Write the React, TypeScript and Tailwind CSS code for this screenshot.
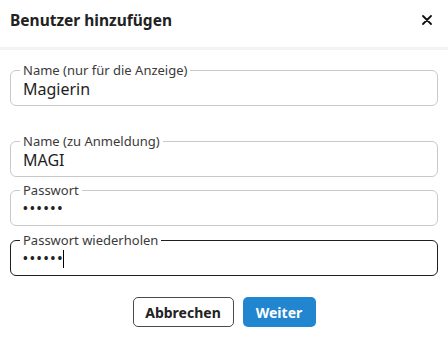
import React from "react";

interface FieldProps {
  label: string;
  value: string;
  password?: boolean;
  focused?: boolean;
  className?: string;
}

const Field: React.FC<FieldProps> = ({ label, value, password, focused, className }) => {
  return (
    <fieldset
      className={`rounded-[6px] border px-[9px] pb-[5px] ${
        focused ? "border-[#1f1f1f]" : "border-[#c9c9c9]"
      } ${className ?? ""}`}
    >
      <legend className="px-[3px] text-[13px] leading-4 text-[#3a3a3a]">{label}</legend>
      <div className="flex h-[22px] items-center px-[3px]">
        {password ? (
          <span className="text-[12.5px] font-bold tracking-[2.2px] text-[#222]">{value}</span>
        ) : (
          <span className="text-[16px] leading-[22px] text-[#1e1e1e]">{value}</span>
        )}
        {focused && <span className="ml-[-1px] h-[18px] w-px bg-black" />}
      </div>
    </fieldset>
  );
};

export default function App() {
  return (
    <div
      className="h-[346px] w-[448px] bg-white"
      style={{ fontFamily: '"Noto Sans", "Open Sans", sans-serif' }}
    >
      {/* header */}
      <div className="flex h-[50px] items-start justify-between border-b-[3px] border-[#f3f3f3] pl-[10px] pr-[16px] pt-[8px]">
        <h1 className="text-[15.5px] font-bold leading-6 text-[#222]">Benutzer hinzufügen</h1>
        <button className="mt-[7px] text-[#111]">
          <svg width="10" height="10" viewBox="0 0 10 10">
            <path d="M1 1 L9 9 M9 1 L1 9" stroke="currentColor" strokeWidth="1.8" strokeLinecap="round" />
          </svg>
        </button>
      </div>

      {/* form */}
      <div className="px-[10px] pt-[12px]">
        <Field label="Name (nur für die Anzeige)" value="Magierin" />
        <Field className="mt-[27px]" label="Name (zu Anmeldung)" value="MAGI" />
        <Field className="mt-[5px]" label="Passwort" value="••••••" password />
        <Field className="mt-[6px]" label="Passwort wiederholen" value="••••••" password focused />
      </div>

      {/* buttons */}
      <div className="mt-[21px] flex justify-center gap-[9px]">
        <button className="h-[30px] w-[101px] rounded-[5px] border border-[#4a4a4a] bg-white text-[14px] font-bold text-[#222]">
          Abbrechen
        </button>
        <button className="h-[30px] w-[73px] rounded-[5px] bg-[#2185d0] text-[14px] font-bold text-white">
          Weiter
        </button>
      </div>
    </div>
  );
}
